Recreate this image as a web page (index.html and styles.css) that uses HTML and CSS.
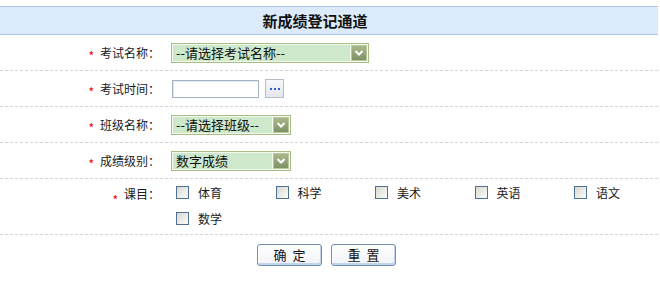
FILE: index.html
```html
<!DOCTYPE html>
<html lang="zh-CN">
<head>
<meta charset="utf-8">
<title>新成绩登记通道</title>
<link rel="stylesheet" href="styles.css">
</head>
<body>
<div class="page">
  <div class="header">新成绩登记通道</div>

  <div class="row">
    <div class="label"><span class="star">*</span>考试名称：</div>
    <div class="field">
      <div class="combo combo-wide"><span class="val">--请选择考试名称--</span><span class="arr"><svg width="10" height="8" viewBox="0 0 10 8"><path d="M1.5 2 L5 5.5 L8.5 2" fill="none" stroke="#fff" stroke-width="2"/></svg></span></div>
    </div>
  </div>

  <div class="row">
    <div class="label"><span class="star">*</span>考试时间：</div>
    <div class="field">
      <input class="txt" type="text">
      <button class="dots" type="button"><span></span><span></span><span></span></button>
    </div>
  </div>

  <div class="row">
    <div class="label"><span class="star">*</span>班级名称：</div>
    <div class="field">
      <div class="combo combo-narrow"><span class="val">--请选择班级--</span><span class="arr"><svg width="10" height="8" viewBox="0 0 10 8"><path d="M1.5 2 L5 5.5 L8.5 2" fill="none" stroke="#fff" stroke-width="2"/></svg></span></div>
    </div>
  </div>

  <div class="row">
    <div class="label"><span class="star">*</span>成绩级别：</div>
    <div class="field">
      <div class="combo combo-narrow"><span class="val">数字成绩</span><span class="arr"><svg width="10" height="8" viewBox="0 0 10 8"><path d="M1.5 2 L5 5.5 L8.5 2" fill="none" stroke="#fff" stroke-width="2"/></svg></span></div>
    </div>
  </div>

  <div class="row row-subjects">
    <div class="label label-top"><span class="star">*</span>课目：</div>
    <div class="field subjects">
      <label class="item"><input type="checkbox" class="cb"><span>体育</span></label>
      <label class="item"><input type="checkbox" class="cb"><span>科学</span></label>
      <label class="item"><input type="checkbox" class="cb"><span>美术</span></label>
      <label class="item"><input type="checkbox" class="cb"><span>英语</span></label>
      <label class="item"><input type="checkbox" class="cb"><span>语文</span></label>
      <label class="item"><input type="checkbox" class="cb"><span>数学</span></label>
    </div>
  </div>

  <div class="actions">
    <button class="btn" type="button">确&nbsp;&nbsp;定</button>
    <button class="btn" type="button">重&nbsp;&nbsp;置</button>
  </div>
</div>
</body>
</html>
```

FILE: styles.css
```css
html, body {
  margin: 0;
  padding: 0;
  background: #fff;
}
body {
  font-family: "Noto Sans CJK SC", "Noto Sans", sans-serif;
  font-size: 12px;
  color: #222;
  overflow: hidden;
}
.page {
  padding-top: 6px;
}
.header {
  margin-right: 2px;
  height: 27px;
  line-height: 27px;
  border-top: 1px solid #a9c5ea;
  border-bottom: 1px solid #a9c5ea;
  background: #dcebfc;
  text-align: center;
  font-size: 15px;
  font-weight: bold;
  color: #111;
  padding-right: 28px;
}
.row {
  display: flex;
  height: 35px;
  padding-bottom: 1px;
  background: linear-gradient(to right, #d6d6d6 3px, transparent 3px) 0 100% / 5px 1px repeat-x;
}
.label {
  width: 160px;
  flex: none;
  display: flex;
  justify-content: flex-end;
  align-items: center;
  color: #1a1a1a;
}
.star {
  color: #e60000;
  font-size: 12px;
  margin-right: 6px;
  padding-top: 6px;
}
.field {
  flex: 1;
  padding-left: 11px;
  display: flex;
  align-items: center;
}
.combo {
  box-sizing: border-box;
  height: 20px;
  display: flex;
  border: 1px solid #aabc86;
  padding: 1px;
  background: #f4f8ee;
}
.combo-wide { width: 198px; }
.combo-narrow { width: 120px; }
.combo .val {
  flex: 1;
  display: flex;
  align-items: center;
  background: #cde8cb;
  font-size: 13px;
  padding-left: 3px;
  color: #111;
  white-space: nowrap;
}
.combo .arr {
  box-sizing: border-box;
  width: 16px;
  height: 16px;
  margin-left: 1px;
  border: 1px solid #b9c79e;
  background: linear-gradient(#aab78c, #7f9264);
  display: flex;
  align-items: center;
  justify-content: center;
}
.txt {
  box-sizing: border-box;
  width: 87px;
  height: 18px;
  margin: 0 0 0 1px;
  border: 1px solid #a3b3c7;
  box-shadow: inset 1px 1px 0 #e3e9f0;
  padding: 0 2px;
  font: inherit;
}
.dots {
  box-sizing: border-box;
  width: 19px;
  height: 19px;
  margin-left: 6px;
  padding: 0;
  border: 1px solid #b4bcc8;
  background: linear-gradient(#f6f7fa, #e4e7ee);
  display: flex;
  align-items: center;
  justify-content: center;
  gap: 2px;
}
.dots span {
  width: 2px;
  height: 2px;
  background: #2a62d6;
}
.row-subjects {
  height: 55px;
}
.label-top {
  align-items: flex-start;
  padding-top: 6px;
}
.subjects {
  display: grid;
  grid-template-columns: repeat(4, 99.5px) auto;
  grid-auto-rows: 26px;
  align-items: center;
  align-content: start;
}
.item {
  display: flex;
  align-items: center;
  color: #1a1a1a;
}
.cb {
  appearance: none;
  -webkit-appearance: none;
  box-sizing: border-box;
  width: 13px;
  height: 13px;
  margin: 0 9px 0 5px;
  border: 1px solid #4f6f95;
  background: linear-gradient(135deg, #d9d9d2, #fbfbf9);
}
.actions {
  display: flex;
  justify-content: center;
  gap: 9px;
  padding-top: 9px;
  padding-right: 7px;
}
.btn {
  box-sizing: border-box;
  width: 65px;
  height: 22px;
  border: 1px solid #6f8fb0;
  border-radius: 3px;
  background: linear-gradient(#ffffff, #f0f3f8);
  box-shadow: inset -1px -2px 0 #c2d3ee, inset 1px 1px 0 #fff;
  font-family: "Noto Sans CJK SC", sans-serif;
  font-size: 13px;
  color: #111;
  padding: 0;
  line-height: 18px;
}
```
